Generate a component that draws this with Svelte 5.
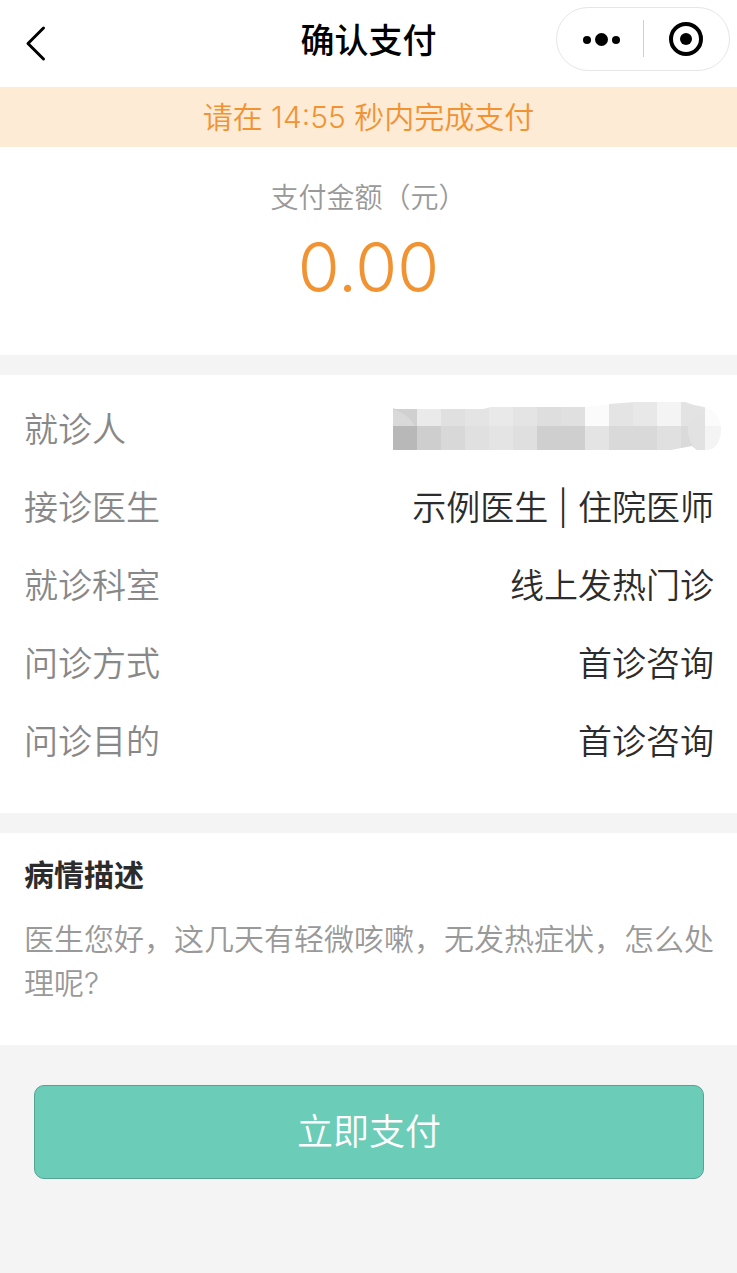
<script lang="ts">
  type Detail = { label: string; value: string; masked?: boolean };

  const remaining = '14:55';
  const amount = 0;

  const details: Detail[] = [
    { label: '就诊人', value: '', masked: true },
    { label: '接诊医生', value: '示例医生 | 住院医师' },
    { label: '就诊科室', value: '线上发热门诊' },
    { label: '问诊方式', value: '首诊咨询' },
    { label: '问诊目的', value: '首诊咨询' },
  ];

  // mosaic shades, one per 24px tile
  const upper = ['#d0d0d0', '#eaeaea', '#e0e0e0', '#e4e4e4', '#e9e9e9', '#e4e4e4', '#dedede', '#e0e0e0', '#fbfbfb', '#e4e4e4', '#e8e8e8', '#f4f4f4', '#e3e3e3', '#fbfbfb'];
  const lower = ['#b8b8b8', '#cecece', '#d8d8d8', '#e0e0e0', '#e4e4e4', '#dfdfdf', '#cfcfcf', '#cfcfcf', '#e4e4e4', '#d9d9d9', '#d9d9d9', '#e0e0e0', '#dadada', '#f4f4f4'];
</script>

<div class="page">
  <header class="navbar">
    <button class="back" type="button" aria-label="返回">
      <svg width="24" height="38" viewBox="0 0 24 38" fill="none" stroke="#000" stroke-width="3" stroke-linecap="round" stroke-linejoin="round">
        <path d="M19.5 3 L4 18.5 L19.5 34" />
      </svg>
    </button>
    <h1>确认支付</h1>
    <div class="capsule">
      <button type="button" aria-label="更多">
        <svg width="40" height="16" viewBox="0 0 40 16">
          <circle cx="7" cy="9" r="4" />
          <circle cx="21.5" cy="8.5" r="6.5" />
          <circle cx="36" cy="9" r="4" />
        </svg>
      </button>
      <span class="divider"></span>
      <button type="button" aria-label="关闭">
        <svg width="36" height="36" viewBox="0 0 36 36">
          <circle cx="18" cy="18" r="15" fill="none" stroke="#000" stroke-width="4" />
          <circle cx="18" cy="18" r="6" />
        </svg>
      </button>
    </div>
  </header>

  <p class="notice">请在 {remaining} 秒内完成支付</p>

  <section class="amount">
    <p class="amount-label">支付金额（元）</p>
    <p class="amount-value">{amount.toFixed(2)}</p>
  </section>

  <dl class="details">
    {#each details as item (item.label)}
      <div class="row">
        <dt>{item.label}</dt>
        {#if item.masked}
          <dd class="masked">
            <svg width="328" height="48" viewBox="0 0 328 48" role="img" aria-label="已隐藏">
              <clipPath id="mask-shape">
                <path d="M0 6 L2 7 H90 L98 5 H190 Q205 4 216 2 L242 0 H292 Q302 4 311 5 C323 8 328 17 328 27 C328 39 323 48 314 48 H304 L299 44 L278 48 H0 Z" />
              </clipPath>
              <g clip-path="url(#mask-shape)" shape-rendering="crispEdges">
                {#each upper as shade, i}
                  <rect x={i * 24} y="0" width="24" height="24" fill={shade} />
                {/each}
                {#each lower as shade, i}
                  <rect x={i * 24} y="24" width="24" height="24" fill={shade} />
                {/each}
                <path d="M0 7 Q16 12 22 24 H0 Z" fill="#d9d9d9" />
                <path d="M312 12 C298 12 295 20 295 28 C295 38 299 44 305 48 H312 Z" fill="#e2e2e2" />
              </g>
            </svg>
          </dd>
        {:else}
          <dd>{item.value}</dd>
        {/if}
      </div>
    {/each}
  </dl>

  <section class="description">
    <h2>病情描述</h2>
    <p>医生您好，这几天有轻微咳嗽，无发热症状，怎么处理呢?</p>
  </section>

  <footer>
    <button class="pay" type="button">立即支付</button>
  </footer>
</div>

<style>
  :global(body) {
    margin: 0;
    background: #f4f4f4;
  }

  .page {
    font-family: Inter, 'Noto Sans CJK SC', sans-serif;
    font-weight: 350;
    color: #2c2c2c;
  }

  h1,
  h2,
  p,
  dl,
  dd {
    margin: 0;
  }

  button {
    font-family: inherit;
    font-weight: inherit;
    cursor: pointer;
  }

  .navbar {
    display: grid;
    grid-template-columns: 1fr auto 1fr;
    align-items: center;
    height: 87px;
    padding: 0 7px 0 16px;
    box-sizing: border-box;
    background: #fff;
  }

  .back {
    display: flex;
    justify-self: start;
    padding: 8px;
    border: 0;
    background: none;
  }

  h1 {
    padding: 0 9px 6px 0;
    font-size: 34px;
    line-height: 48px;
    font-weight: 500;
    color: #000;
  }

  .capsule {
    display: flex;
    align-items: center;
    justify-self: end;
    width: 174px;
    height: 64px;
    margin-bottom: 10px;
    box-sizing: border-box;
    border: 1px solid #e6e6e6;
    border-radius: 32px;
  }

  .capsule button {
    display: flex;
    flex: 1;
    align-items: center;
    justify-content: center;
    height: 100%;
    padding: 0;
    border: 0;
    background: none;
  }

  .divider {
    width: 1px;
    height: 37px;
    background: #d0d0d0;
  }

  .notice {
    background: #fdebd6;
    color: #f19333;
    font-size: 30px;
    line-height: 60px;
    text-align: center;
  }

  .amount {
    padding: 29px 0 48px;
    background: #fff;
    text-align: center;
  }

  .amount-label {
    font-size: 28px;
    line-height: 44px;
    color: #999;
  }

  .amount-value {
    margin-top: 7px;
    font-size: 68px;
    line-height: 80px;
    color: #f19333;
  }

  .details {
    margin-top: 20px;
    padding: 13px 23px 35px 24px;
    background: #fff;
  }

  .row {
    display: flex;
    align-items: center;
    justify-content: space-between;
    height: 78px;
    font-size: 34px;
  }

  dt {
    color: #888;
  }

  .masked {
    margin-right: -7px;
    padding-bottom: 2px;
  }

  .masked svg {
    display: block;
  }

  .description {
    margin-top: 20px;
    padding: 20px 20px 40px 24px;
    background: #fff;
    line-height: 44px;
  }

  h2 {
    margin-bottom: 20px;
    font-size: 30px;
    font-weight: 700;
  }

  .description p {
    font-size: 30px;
    color: #999;
  }

  footer {
    padding: 40px 33px 40px 34px;
  }

  .pay {
    width: 100%;
    height: 94px;
    padding: 0 0 6px;
    border: 1px solid #56a393;
    border-radius: 10px;
    background: #6bccb8;
    color: #fff;
    font-size: 36px;
  }
</style>
